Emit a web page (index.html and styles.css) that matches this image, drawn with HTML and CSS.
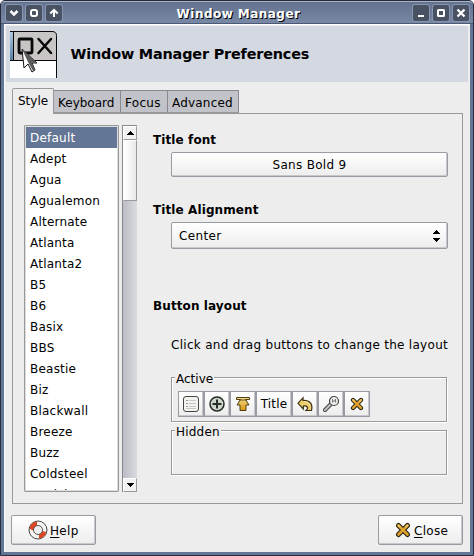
FILE: index.html
```html
<!DOCTYPE html>
<html lang="en">
<head>
<meta charset="utf-8">
<title>Window Manager</title>
<link rel="stylesheet" href="styles.css">
</head>
<body>
<svg class="defs" width="0" height="0">
  <defs>
    <linearGradient id="gold" x1="0" y1="0" x2="0" y2="1"><stop offset="0" stop-color="#f5df91"/><stop offset="1" stop-color="#d9950c"/></linearGradient>
    <linearGradient id="blue" x1="0" y1="0" x2="0" y2="1"><stop offset="0" stop-color="#b0c8dc"/><stop offset="1" stop-color="#5682aa"/></linearGradient>
    <symbol id="cross" viewBox="0 0 16 16">
      <path d="M3.5 3.5 12.5 12.5M12.5 3.5 3.5 12.5" fill="none" stroke="#252414" stroke-width="5" stroke-linecap="round"/>
      <path d="M3.5 3.5 12.5 12.5M12.5 3.5 3.5 12.5" fill="none" stroke="#dfa12b" stroke-width="2.8" stroke-linecap="round"/>
      <path d="M3.3 3.2 5 4.8M12.7 3.2 11 4.8" fill="none" stroke="#f0cf78" stroke-width="1.5" stroke-linecap="round"/>
    </symbol>
  </defs>
</svg>
<div class="window">
  <header class="titlebar">
    <div class="controls">
      <span class="control"><svg width="16" height="16"><path d="M4.500 6 8 9.500 11.500 6" fill="none" stroke="#fff" stroke-width="2.500"/></svg></span>
      <span class="control"><svg width="16" height="16"><rect x="5" y="5" width="6" height="6" rx="2" fill="none" stroke="#fff" stroke-width="2"/></svg></span>
      <span class="control"><svg width="16" height="16"><path d="M4.3 8.5 8 4.8 11.7 8.5M8 5v7" fill="none" stroke="#fff" stroke-width="2"/></svg></span>
    </div>
    <div class="caption">Window Manager</div>
    <div class="controls">
      <span class="control"><svg width="16" height="16"><path d="M5 11h6" stroke="#fff" stroke-width="2"/></svg></span>
      <span class="control"><svg width="16" height="16"><rect x="5" y="5" width="6" height="6" rx=".5" fill="none" stroke="#fff" stroke-width="2"/></svg></span>
      <span class="control"><svg width="16" height="16"><path d="M4.5 4.5 11.5 11.5M11.5 4.5 4.5 11.5" stroke="#fff" stroke-width="2.3"/></svg></span>
    </div>
  </header>
  <div class="client">
    <div class="banner">
      <svg width="47" height="47" viewBox="0 0 47 47">
        <path d="M0 29h46v18H0z" fill="#fff"/>
        <path d="M0 1h3v28H0z" fill="url(#blue)"/>
        <path d="M4 1h38q4 0 4 4v24H4z" fill="#c9c5c5"/>
        <path d="M0 .5h42q4.500 0 4.500 4V47M0 29.500h46M3.500 1v28" fill="none" stroke="#080808"/>
        <rect x="9" y="8" width="13" height="14" rx="1" fill="none" stroke="#080808" stroke-width="2.800"/>
        <path d="M28.500 8 41 22M41 8 28.500 22" stroke="#080808" stroke-width="2.500" stroke-linecap="round"/>
        <path d="M12 18 27 32 22 32 25 39 22 41 18 33 14 37z" fill="#fff" stroke="#111" stroke-width="1"/>
        <path d="M12 18 27 32 22 32 25 39 23 40 18 31z" fill="#5e5b5b"/>
      </svg>
      <h1>Window Manager Preferences</h1>
    </div>
    <nav class="tabs">
      <span class="tab active">Style</span><span class="tab keyboard">Keyboard</span><span class="tab focus">Focus</span><span class="tab advanced">Advanced</span>
    </nav>
    <main class="page">
      <ul class="themes">
        <li class="selected">Default</li><li>Adept</li><li>Agua</li><li>Agualemon</li><li>Alternate</li><li>Atlanta</li><li>Atlanta2</li><li>B5</li><li>B6</li><li>Basix</li><li>BBS</li><li>Beastie</li><li>Biz</li><li>Blackwall</li><li>Breeze</li><li>Buzz</li><li>Coldsteel</li><li class="partial">Coolclean</li>
      </ul>
      <div class="scrollbar">
        <span class="stepper"><svg width="7" height="4" shape-rendering="crispEdges"><path d="M3 0h1v1h1v1h1v1h1v1H0V3h1V2h1V1h1z"/></svg></span>
        <span class="thumb"></span>
        <span class="trough"></span>
        <span class="stepper down"><svg width="7" height="4" shape-rendering="crispEdges"><path d="M0 0h7v1H6v1H5v1H4v1H3V3H2V2H1V1H0z"/></svg></span>
      </div>
      <section class="settings">
        <h2>Title font</h2>
        <div class="button font-button">Sans Bold 9</div>
        <h2 class="alignment-title">Title Alignment</h2>
        <div class="button combo"><span>Center</span>
          <svg width="7" height="12" shape-rendering="crispEdges"><path d="M3 0h1v1h1v1h1v1h1v1H0V3h1V2h1V1h1zM0 8h7v1H6v1H5v1H4v1H3v-1H2v-1H1V9H0z"/></svg>
        </div>
        <h2 class="layout-title">Button layout</h2>
        <p class="hint">Click and drag buttons to change the layout</p>
        <div class="group">
          <div class="legend active-legend">Active</div>
          <div class="tools">
            <span class="tool"><svg width="18" height="18"><rect x="1.500" y="1.500" width="15" height="15" rx="2.500" fill="#f2f2ef" stroke="#444"/><path d="M4 5.500h2M4 8.500h2M4 11.500h2" stroke="#999"/><path d="M7 5.500h7M7 8.500h7M7 11.500h7M4 13.500h10" stroke="#c5c5c5"/></svg></span>
            <span class="tool"><svg width="18" height="18"><circle cx="9" cy="9" r="7" fill="#cbd5c8" stroke="#252a25" stroke-width="1.500"/><path d="M4.500 9h9M9 4.500v9" stroke="#292d29" stroke-width="2"/></svg></span>
            <span class="tool"><svg width="18" height="18"><path d="M2.500 2.500h13v2h-4L15 10h-3v5.500H6V10H3L6.500 4.500h-4z" fill="url(#gold)" stroke="#4b3d12"/><path d="M5 5h8" stroke="#66500c"/></svg></span>
            <span class="tool label">Title</span>
            <span class="tool"><svg width="18" height="18"><path d="M2 8.300 7 2.700V5.300C14 5 17 9 15.500 15.500H10C13 13 11.500 10.500 7.300 11V14z" fill="#edcf6d" stroke="#3b3014" stroke-width="1.200"/><path d="M8 6.500q4.500-.2 6 3.500" fill="none" stroke="#fae9a8"/></svg></span>
            <span class="tool"><svg width="18" height="18"><path d="M9 9 3 15" stroke="#444" stroke-width="4" stroke-linecap="round"/><path d="M9 9 3 15" stroke="#c5c5c1" stroke-width="2" stroke-linecap="round"/><circle cx="12" cy="6" r="4.500" fill="#ededeb" stroke="#444" stroke-width="1.200"/><path d="M10.500 4v3.500M13.500 4v3.500M11 6h2" stroke="#777"/></svg></span>
            <span class="tool"><svg width="14" height="14"><use href="#cross"/></svg></span>
          </div>
        </div>
        <div class="group hidden-group"><div class="legend hidden-legend">Hidden</div></div>
      </section>
    </main>
    <footer class="actions">
      <div class="button action">
        <svg width="20" height="20"><circle cx="10" cy="10" r="9" fill="#f6f4f1" stroke="#444"/><path d="M1.800 8A8.500 8.500 0 0 1 9 1.500V6A4 4 0 0 0 6 9zM18.200 12A8.500 8.500 0 0 1 11 18.500V14A4 4 0 0 0 14 11z" fill="#df4421"/><path d="M3 4 6 7V11L2 9z" fill="#df4421"/><circle cx="10" cy="10" r="4.500" fill="#eee" stroke="#555"/></svg>
        <span class="action-label"><u>H</u>elp</span>
      </div>
      <div class="button action close"><svg width="16" height="16"><use href="#cross"/></svg><span class="action-label"><u>C</u>lose</span></div>
    </footer>
  </div>
</div>
</body>
</html>
```
FILE: styles.css
```css
* { box-sizing: border-box; }
body { margin: 0; width: 474px; height: 556px; overflow: hidden; background: #fff; font: 12px/14px "DejaVu Sans", sans-serif; color: #000; }
.defs { position: absolute; }
h1, h2, p, ul { margin: 0; padding: 0; }
.window { width: 474px; height: 556px; border: 1px solid #252d3c; border-radius: 5px 5px 0 0; background: #647695; padding: 0 3px 3px; }
.titlebar { height: 23px; margin: 0 -3px; padding: 3px 4px 0 5px; display: flex; border-radius: 4px 4px 0 0; border-top: 1px solid #a9b3c5; border-bottom: 1px solid #4a5a75; background: linear-gradient(#63728e, #7888a5); }
.controls { display: flex; gap: 4px; }
.control { width: 16px; height: 16px; border-radius: 2px; background: #485262; box-shadow: 0 0 0 1px #8795b1; }
.control svg, .banner svg, .button svg, .tool svg { display: block; }
.caption { flex: 1; text-align: center; color: #fff; font-weight: bold; font-size: 12px; line-height: 18px; letter-spacing: .46px; padding-left: 2px; text-shadow: 1px 1px #000; }
.client { height: 528px; width: 466px; background: #ededed; border-top: 1px solid #fff; border-left: 1px solid #f8f8f8; }
.banner { height: 56px; margin: 1px 2px 0 1px; padding-left: 4px; background: #d4d8e1; display: flex; align-items: center; gap: 13px; }
h1 { font-size: 14.4px; line-height: 18px; font-weight: bold; letter-spacing: -.17px; padding-left: .5px; }
.tabs { height: 25px; display: flex; align-items: flex-end; margin: 6px 0 0 7px; }
.tab { height: 23px; padding: 5px 0 0 4px; border: 1px solid #878890; border-left: 0; border-bottom-color: #999; background: #c2c3c9; white-space: nowrap; }
.tab.active { width: 42px; height: 26px; padding-left: 5px; background: #ededed; border: 1px solid #999; border-bottom: 0; margin-bottom: -1px; z-index: 1; border-radius: 2px 2px 0 0; }
.keyboard { width: 67px; }
.focus { width: 47px; letter-spacing: .3px; }
.advanced { width: 71px; letter-spacing: .2px; }
.page { width: 451px; height: 391px; margin-left: 7px; border: 1px solid #999; display: flex; padding: 11px 0 0 11px; }
.themes { width: 95px; height: 367px; overflow: hidden; list-style: none; border: 1px solid #999; box-shadow: inset 0 0 0 1px #ddd; border-radius: 1px; background: #fff; padding: 1px; letter-spacing: .22px; }
.themes li { height: 21px; line-height: 23px; padding-left: 4px; }
.themes .selected { background: #647695; color: #fff; }
.themes .partial { height: 6px; overflow: hidden; }
.scrollbar { width: 15px; height: 367px; margin-left: 3px; border-left: 1px solid #878890; border-top: 1px solid #878890; background: #c8c9d0; display: flex; flex-direction: column; }
.stepper { height: 14px; border: 1px solid #fff; border-right-color: #999; border-bottom-color: #999; background: #f2f2f2; display: grid; place-items: center; }
.stepper svg { display: block; }
.thumb { height: 61px; border: 1px solid #fff; border-right-color: #999; border-bottom-color: #999; background: linear-gradient(90deg, #fff, #e9e9e9); }
.trough { flex: 1; background: linear-gradient(90deg, #bbbcc4, #dadbe0); }
.settings { width: 297px; margin-left: 16px; padding-top: 7px; }
h2 { height: 14px; font-size: 12px; line-height: 16px; letter-spacing: .1px; }
.button { border: 1px solid #999ba3; border-radius: 2px; background: linear-gradient(#fff, #ededed); box-shadow: inset -1px -1px #c8c8cc; }
.font-button { width: 277px; height: 25px; margin: 6px 0 0 18px; text-align: center; line-height: 25px; letter-spacing: .3px; }
.alignment-title { margin-top: 25px; }
.combo { width: 277px; height: 27px; margin: 6px 0 0 18px; padding: 0 7px; display: flex; align-items: center; justify-content: space-between; letter-spacing: .35px; }
.layout-title { margin-top: 49px; }
.hint { height: 14px; margin: 25px 0 0 18px; line-height: 16px; white-space: nowrap; letter-spacing: .29px; }
.group { width: 276px; height: 45px; margin: 26px 0 0 18px; border: 1px solid #999; box-shadow: 1px 1px #fff, inset 1px 1px #fff; }
.hidden-group { margin-top: 8px; }
.legend { height: 14px; margin: -7px 0 0 3px; padding-left: 1px; background: #ededed; line-height: 16px; }
.active-legend { width: 39px; }
.hidden-legend { width: 46px; letter-spacing: .2px; }
.tools { display: flex; margin: 6px 0 0 6px; }
.tool { width: 26px; height: 26px; border: 1px solid #999ba3; background: linear-gradient(#fff, #ededed); display: grid; place-items: center; box-shadow: inset -1px -1px #c8c8cc; }
.tool.label { width: 36px; line-height: 16px; letter-spacing: .2px; }
.actions { display: flex; justify-content: space-between; width: 452px; margin: 11px 0 0 6px; }
.action { width: 85px; height: 30px; padding-left: 16px; display: flex; align-items: center; gap: 2px; }
.action.close { gap: 3px; }
.action-label { line-height: 16px; padding-top: 1px; letter-spacing: .3px; }
u { text-underline-offset: 2px; text-decoration-thickness: 1px; text-decoration-skip-ink: none; }
```
